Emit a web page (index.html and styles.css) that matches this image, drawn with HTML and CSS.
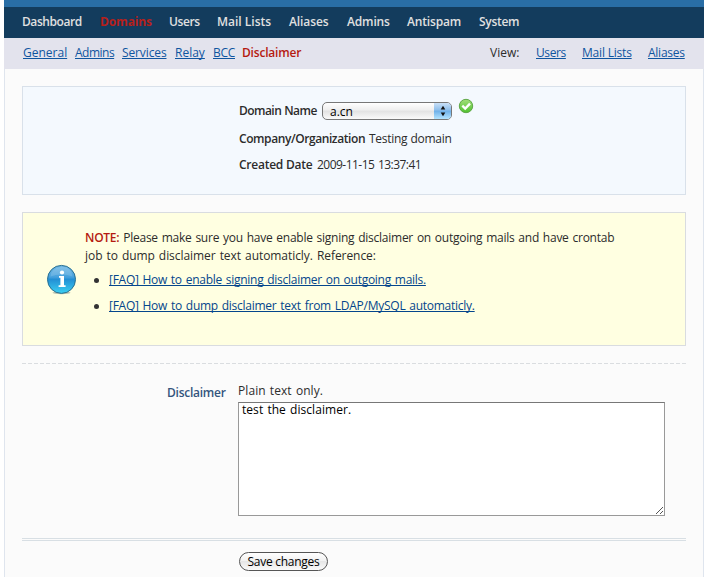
FILE: index.html
```html
<!DOCTYPE html>
<html lang="en">
<head>
<meta charset="utf-8">
<title>Domain disclaimer</title>
<link rel="stylesheet" href="styles.css">
</head>
<body>
<div class="page">
  <div class="topbar"></div>
  <nav class="nav">
    <a class="m1">Dashboard</a><a class="m2 active">Domains</a><a class="m3">Users</a><a class="m4">Mail Lists</a><a class="m5">Aliases</a><a class="m6">Admins</a><a class="m7">Antispam</a><a class="m8">System</a>
  </nav>
  <div class="subnav">
    <div class="tabs"><a class="t1">General</a><a class="t2">Admins</a><a class="t3">Services</a><a class="t4">Relay</a><a class="t5">BCC</a><b class="t6">Disclaimer</b></div>
    <div class="views"><span class="v1">View:</span><a class="v2">Users</a><a class="v3">Mail Lists</a><a class="v4">Aliases</a></div>
  </div>
  <main class="content">
    <section class="info">
      <div class="row first"><b class="dn">Domain Name</b>
        <span class="select"><span class="value">a.cn</span><span class="arrows"><svg width="18" height="16" viewBox="0 0 18 16"><path d="M9 2.8 11.3 6.5H6.7zM9 13.2 11.3 9.5H6.7z" fill="#111"/></svg></span></span>
        <svg class="ok" width="16" height="16" viewBox="0 0 16 16"><defs><linearGradient id="g" x2="0" y2="1"><stop stop-color="#a4df7c"/><stop offset="1" stop-color="#4fc12f"/></linearGradient></defs><circle cx="8" cy="8" r="6.7" fill="url(#g)" stroke="#5fa848" stroke-width="1"/><path d="M4.3 7.7 7.2 10.5 12 5.7" fill="none" stroke="#fff" stroke-width="2.4"/></svg>
      </div>
      <div class="row"><b class="co">Company/Organization</b><span class="td">Testing domain</span></div>
      <div class="row"><b class="cd">Created Date</b><span class="date">2009-11-15 13:37:41</span></div>
    </section>
    <section class="note">
      <svg class="icon" width="32" height="32" viewBox="0 0 32 32"><defs><linearGradient id="b" x2="0" y2="1"><stop stop-color="#72b9e5"/><stop offset=".42" stop-color="#45a0dc"/><stop offset=".5" stop-color="#238fd4"/><stop offset="1" stop-color="#3bd0f2"/></linearGradient></defs><ellipse cx="15.5" cy="29.8" rx="9" ry="1.5" fill="#8c9a8c" opacity=".6"/><circle cx="15.5" cy="16.4" r="14" fill="url(#b)" stroke="#286f91"/><path d="M4.5 13.5Q5.5 4.5 15.5 4T26.5 13.5Q15.5 9.5 4.5 13.5" fill="#fff" opacity=".15"/><circle cx="16" cy="9.5" r="2.1" fill="#fff"/><path d="M13 13h5v9.3h1.6V24h-7v-1.7h1.8v-7.6H13z" fill="#fff"/></svg>
      <div class="notetext">
        <p><span class="n1"><b class="red">NOTE:</b> Please make sure you have enable signing disclaimer on outgoing mails and have crontab</span><br><span class="n2">job to dump disclaimer text automaticly. Reference:</span></p>
        <ul><li><a class="l1">[FAQ] How to enable signing disclaimer on outgoing mails.</a></li><li><a class="l2">[FAQ] How to dump disclaimer text from LDAP/MySQL automaticly.</a></li></ul>
      </div>
    </section>
    <div class="dashed"></div>
    <section class="form">
      <div class="label"><b class="dl">Disclaimer</b></div>
      <div class="field"><div class="hint"><span class="pt">Plain text only.</span></div>
        <div class="area"><textarea>test the disclaimer.</textarea><svg class="grip" width="8" height="8" viewBox="0 0 8 8" shape-rendering="crispEdges"><path d="M0 7h1v1H0zM1 6h1v1H1zM2 5h1v1H2zM3 4h1v1H3zM4 3h1v1H4zM5 2h1v1H5zM6 1h1v1H6zM4 7h1v1H4zM5 6h1v1H5zM6 5h1v1H6z" fill="#555"/></svg></div>
      </div>
    </section>
    <div class="double"></div>
    <button class="save"><span class="sc">Save changes</span></button>
  </main>
</div>
</body>
</html>
```
FILE: styles.css
```css
* { box-sizing: border-box; }
html, body { height: 100%; overflow: hidden; }
body { margin: 0; background: #fff; color: #2c2c2c; font: 12px/18px "Open Sans", "Noto Sans", sans-serif; }
b { font-weight: 600; }
.page { width: 700px; height: 577px; margin-left: 4px; }
.topbar { height: 7px; background: #296ea6; }
.nav { height: 31px; background: #133c5d; display: flex; gap: 18px; padding: 6px 18px 0; color: #e0e0e0; font-weight: 600; white-space: nowrap; }
.nav a { flex: none; }
.nav .active { color: #b6201b; font-weight: 700; }
.m1 { width: 60px; letter-spacing: -.42px; }
.m2 { width: 51px; letter-spacing: -.15px; }
.m3 { width: 30px; letter-spacing: -.4px; }
.m4 { width: 54px; }
.m5 { width: 40px; letter-spacing: -.1px; }
.m6 { width: 42px; letter-spacing: -.15px; }
.m7 { width: 54px; letter-spacing: -.15px; }
.m8 { width: 40px; letter-spacing: -.3px; }
.subnav { height: 31px; background: #e3e3ed; display: flex; padding: 6px 19px 0 19px; white-space: nowrap; justify-content: space-between; }
.tabs, .views { display: flex; align-items: flex-start; }
.tabs { gap: 8px; }
.views { gap: 16px; }
.tabs a, .views a, .tabs b, .views span { flex: none; }
.t1 { width: 44px; }
.t2 { width: 39px; letter-spacing: -.5px; }
.t3 { width: 45px; letter-spacing: -.12px; }
.t4 { width: 30px; }
.t5 { width: 21px; letter-spacing: -.3px; }
.t6 { width: 59px; letter-spacing: -.2px; }
.v1 { width: 30px; }
.v2 { width: 30px; letter-spacing: -.4px; }
.v3 { width: 50px; letter-spacing: -.2px; }
.v4 { width: 37px; letter-spacing: -.25px; }
.subnav a, .note a { color: #0f55a0; text-decoration: underline; text-underline-offset: 1px; text-decoration-thickness: 1px; text-decoration-skip-ink: none; }
.tabs b, .red { color: #b51a10; }
.content { height: 508px; background: #fbfbfb; border: solid #dfe5ee; border-width: 0 1px; padding: 17px 17px 0; }
.info { height: 109px; border: 1px solid #d9e1ea; background: #f4f9fe; padding: 12px 0 0 216px; }
.row { height: 26px; line-height: 24px; display: flex; white-space: nowrap; gap: 4px; }
.row b, .row span { flex: none; }
.first { height: 28px; }
.dn { width: 78px; letter-spacing: -.55px; word-spacing: .5px; }
.co { width: 126px; letter-spacing: -.42px; }
.cd { width: 74px; letter-spacing: -.25px; }
.td { letter-spacing: -.29px; word-spacing: .5px; }
.date { letter-spacing: -.53px; word-spacing: 1px; }
.select { display: flex; width: 130px; height: 18px; margin: 3px 0 0 1px; border: 1px solid #777; border-radius: 5px; background: linear-gradient(#fff, #eee 45%, #e2e2e2 50%, #fafafa); overflow: hidden; line-height: 17px; color: #000; }
.value { width: 111px; padding-left: 7px; }
.arrows { display: block; width: 18px; background: linear-gradient(#c9e0f7, #8bbdeb 45%, #6eb0e8 50%, #b3e4ff); }
.arrows svg { display: block; }
.ok { margin: -1px 0 0 2px; flex: none; }
.note { display: flex; height: 134px; margin-top: 17px; border: 1px solid #d9dce0; background: #ffffe1; padding: 16px 0 0 23px; }
.icon { flex: none; margin-top: 34px; }
.notetext { margin-left: 7px; white-space: nowrap; word-spacing: 1px; }
.notetext p { margin: 0; }
.n1 { letter-spacing: -.25px; }
.n2 { letter-spacing: -.06px; }
.l1 { letter-spacing: -.27px; }
.l2 { letter-spacing: -.26px; }
.notetext ul { margin: 3px 0 0; padding: 0 0 0 24px; list-style: none; }
.note li { height: 26px; line-height: 24px; display: flex; align-items: flex-start; }
.note li::before { content: ""; width: 5px; height: 5px; border-radius: 50%; background: #333; margin: 10px 10px 0 -15px; }
.note a { color: #04468c; }
.dashed { height: 1px; margin-top: 17px; background: repeating-linear-gradient(90deg, #dadde0 0 4px, transparent 4px 6px); }
.form { display: flex; margin-top: 18px; height: 134px; }
.label { width: 216px; padding-top: 2px; color: #34557d; display: flex; }
.dl { margin-left: 145px; letter-spacing: -.25px; }
.field { width: 427px; white-space: nowrap; }
.hint { height: 20px; }
.pt { letter-spacing: .07px; word-spacing: 1px; }
.area { position: relative; height: 114px; }
textarea { display: block; width: 427px; height: 114px; margin: 0; padding: 0 3px; border: 1px solid #999; border-top-color: #777; background: #fff; color: #000; resize: none; overflow: hidden; outline: 0; font: 12px/14px "Open Sans", "Noto Sans", sans-serif; letter-spacing: .05px; word-spacing: 1px; }
.grip { position: absolute; right: 1px; bottom: 2px; }
.double { height: 3px; margin-top: 22px; border: solid #d8dfe4; border-width: 1px 0; }
.save { display: block; margin: 11px 0 0 217px; width: 89px; height: 19px; border: 1px solid #555; border-radius: 10px; background: linear-gradient(#fff, #f2f2f2 45%, #e6e6e6 50%, #fafafa); padding: 0; color: #000; font: 12px/16px "Open Sans", "Noto Sans", sans-serif; letter-spacing: -.28px; white-space: nowrap; }
```
